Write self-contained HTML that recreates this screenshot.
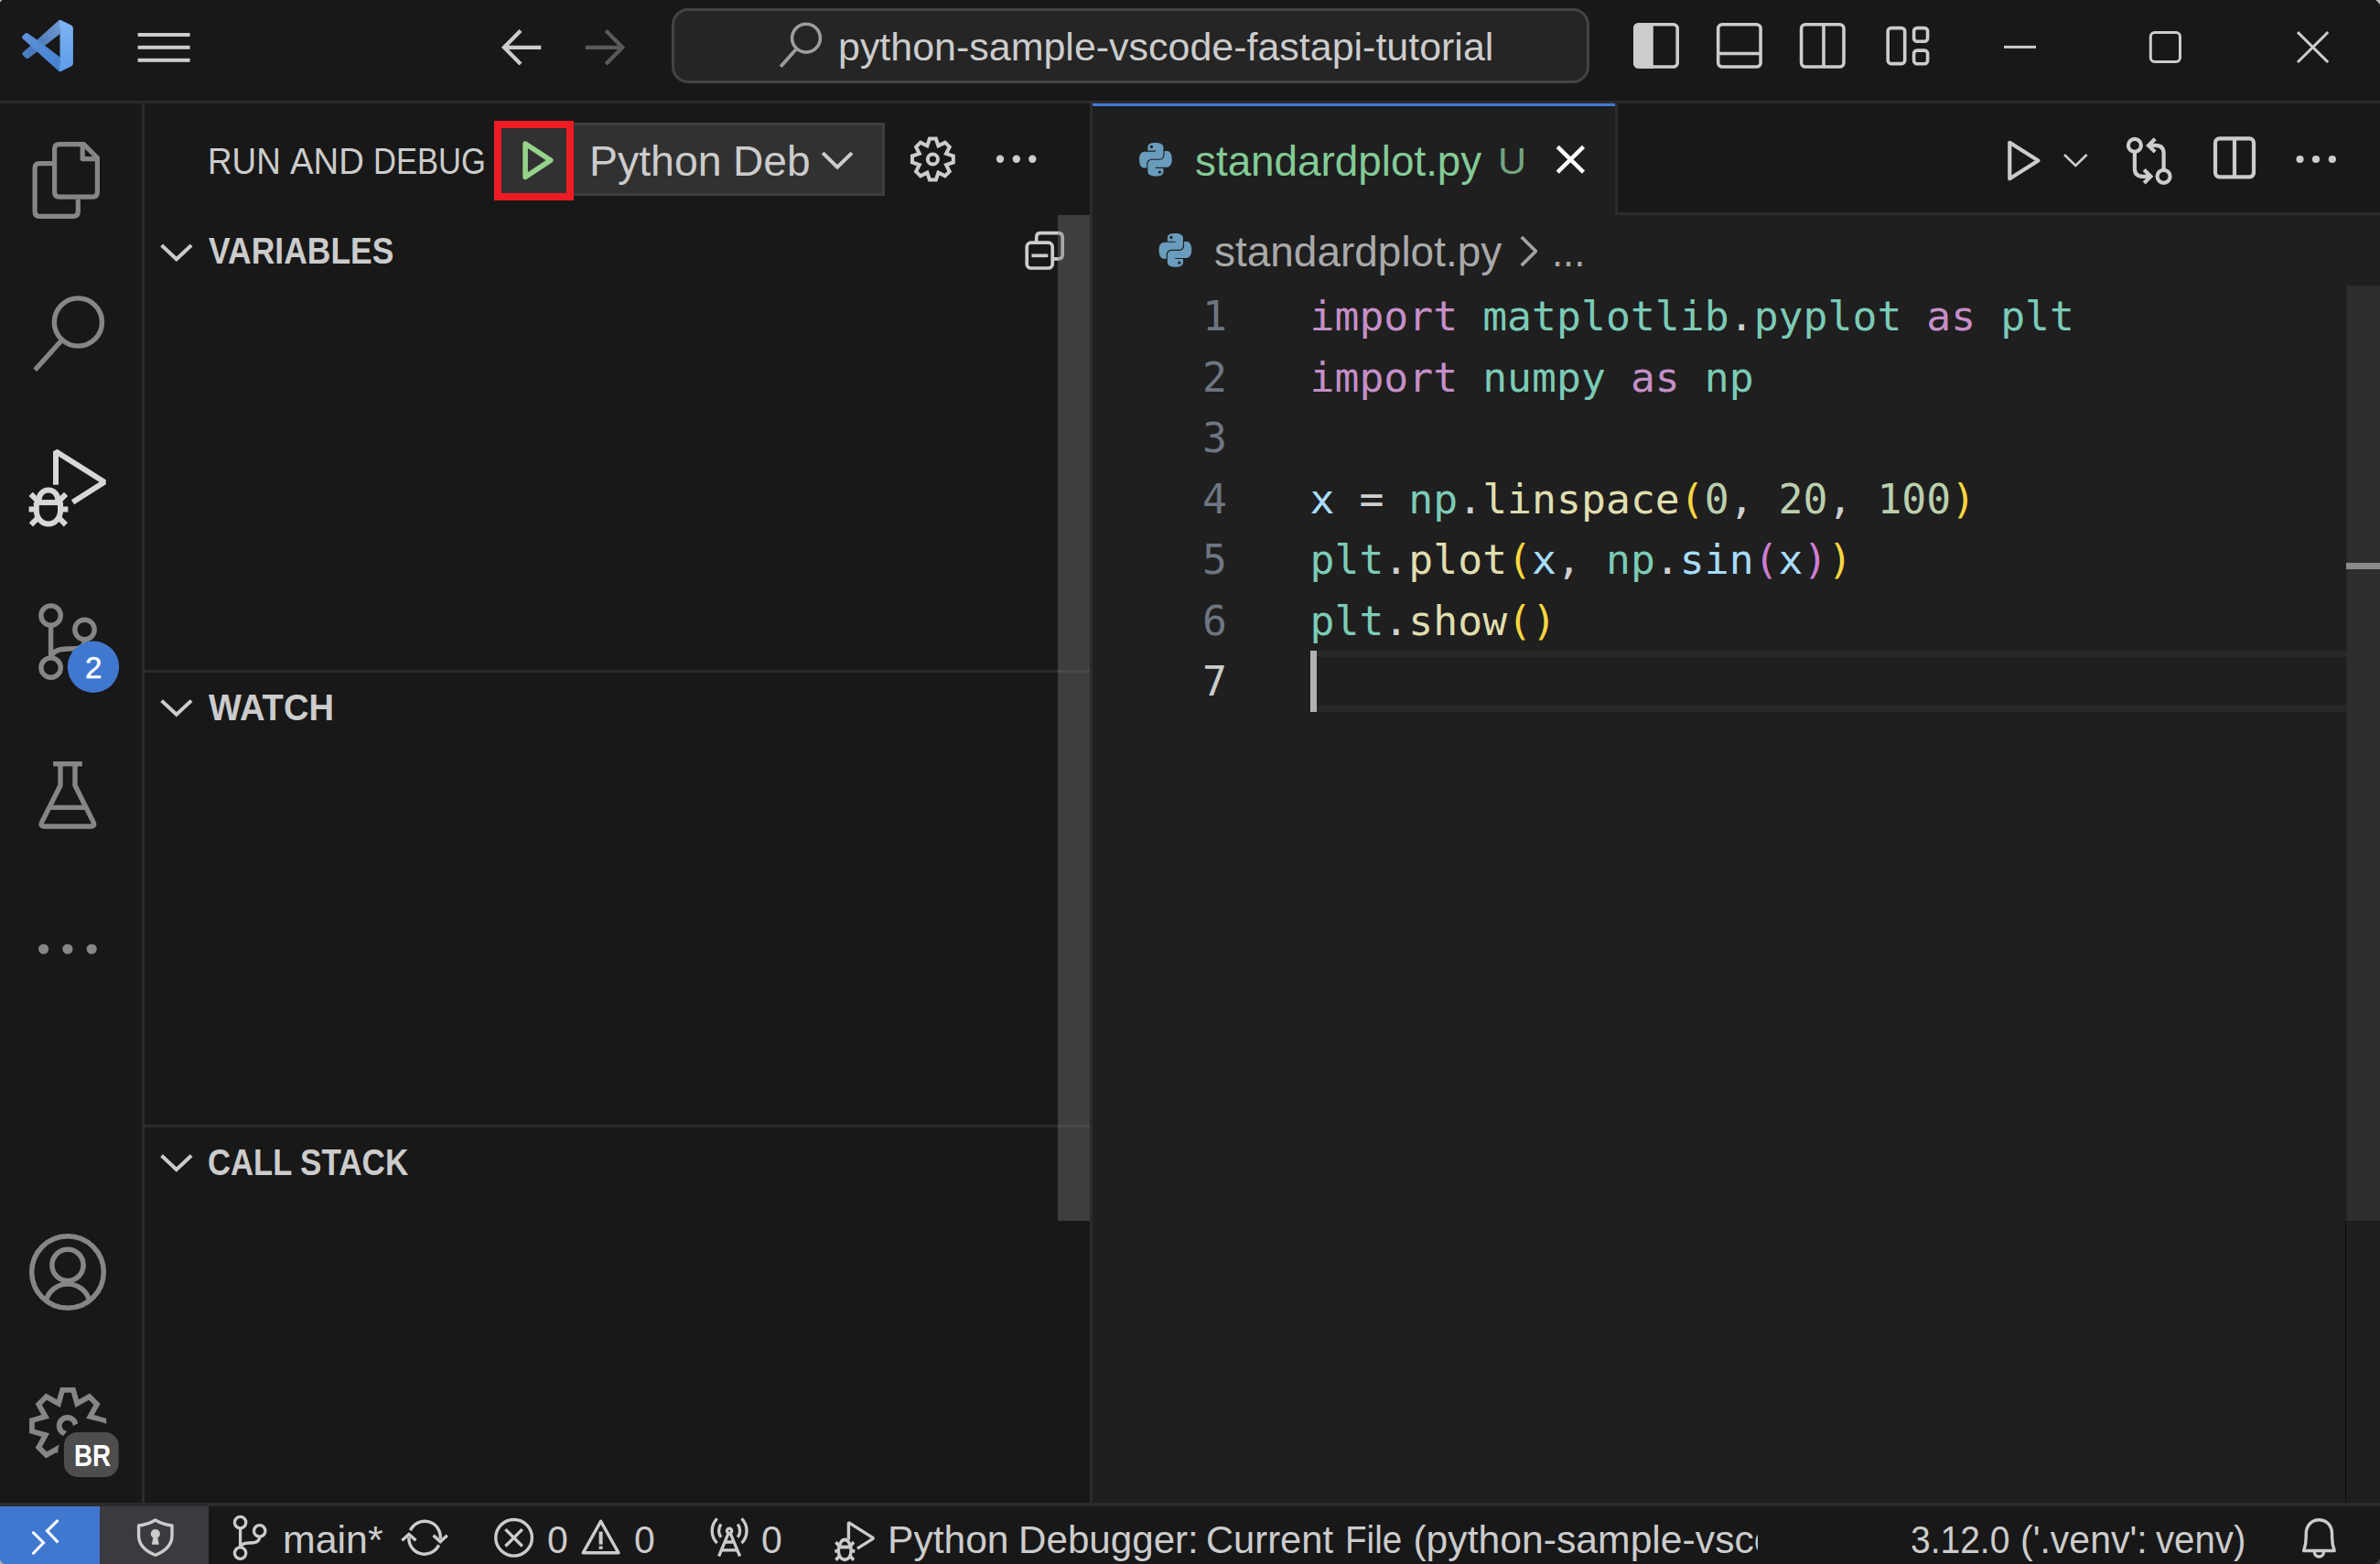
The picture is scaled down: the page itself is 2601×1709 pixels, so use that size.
<!DOCTYPE html>
<html lang="en">
<head>
<meta charset="utf-8">
<title>standardplot.py - python-sample-vscode-fastapi-tutorial - Visual Studio Code</title>
<style>
html,body{margin:0;padding:0;background:#181818;}
body{width:2601px;height:1709px;overflow:hidden;position:relative;font-family:"Liberation Sans", "DejaVu Sans", sans-serif;color:#cccccc;}
div,span,svg{position:absolute;box-sizing:border-box;}
.grp{left:0;top:0;}
.t{white-space:pre;transform-origin:0 0;display:block;}
svg{left:0;top:0;overflow:visible;}
.s{fill:none;stroke:#cccccc;}
.g{fill:none;stroke:#868686;}
#titlebar{left:0;top:0;width:2601px;height:110px;background:#181818;}
#titleborder{left:0;top:110px;width:2601px;height:3px;background:#2b2b2b;}
#activitybar{left:0;top:113px;width:155px;height:1529px;background:#181818;}
#activityborder{left:155px;top:113px;width:3px;height:1529px;background:#2b2b2b;}
#sidebar{left:158px;top:113px;width:1033px;height:1529px;background:#181818;}
#sideborder{left:1191px;top:113px;width:3px;height:1529px;background:#2b2b2b;}
#editor{left:1194px;top:113px;width:1407px;height:1529px;background:#1f1f1f;}
#statusborder{left:0;top:1642px;width:2601px;height:4px;background:#2b2b2b;}
#statusbar{left:0;top:1646px;width:2601px;height:63px;background:#181818;}
</style>
</head>
<body>
<div id="titlebar">
<svg stroke-linejoin="round" width="2601" height="110" viewBox="0 0 2601 110">
<defs>
<linearGradient id="lgA" gradientUnits="userSpaceOnUse" x1="64" y1="24" x2="26" y2="62"><stop offset="0" stop-color="#6f9ad4"/><stop offset="0.45" stop-color="#5983bf"/><stop offset="0.62" stop-color="#4a75b3"/><stop offset="1" stop-color="#4c7fc4"/></linearGradient>
<linearGradient id="lgB" gradientUnits="userSpaceOnUse" x1="27" y1="38" x2="64" y2="76"><stop offset="0" stop-color="#5d91d9"/><stop offset="1" stop-color="#4580d0"/></linearGradient>
<linearGradient id="lg1" x1="0" y1="0" x2="0" y2="1"><stop offset="0" stop-color="#80b3f1"/><stop offset="1" stop-color="#5c9ce9"/></linearGradient>
</defs>
<path d="M64.7,21.8 L65.6,37 L49.1,49.7 L39.9,56.9 L31.4,63.5 Q29.6,64.7 28,63.2 L24.9,60 Q23.6,58.4 25.2,57 L33,50.3 L40.5,43.4 Z" fill="url(#lgA)"/>
<path d="M64.7,78.2 L65.6,62.6 L49.1,49.7 L30.6,36.6 Q28.8,35.4 27.2,36.8 L24.7,39.2 Q23.3,40.7 24.8,42.3 Z" fill="url(#lgB)"/>
<path d="M64.7,21.8 Q65.4,21.4 66.6,22 L77.9,27.4 Q79.9,28.5 79.9,30.8 L79.9,69.2 Q79.9,71.5 77.9,72.6 L66.6,78 Q65.4,78.6 64.7,78.2 L65.5,62 L65.5,38 Z" fill="url(#lg1)"/>
<g fill="#cccccc"><rect x="150.6" y="36" width="57" height="4"/><rect x="150.6" y="49.8" width="57" height="4"/><rect x="150.6" y="63.8" width="57" height="4"/></g>
<path class="s" stroke-width="4.2" stroke-linejoin="miter" d="M569,33.6 L550.9,51.8 L569,70 M550.9,51.8 H591.3"/>
<path class="s" stroke-width="4.2" stroke-linejoin="miter" style="stroke:#5a5a5a" d="M662.2,33.6 L680.3,51.8 L662.2,70 M680.3,51.8 H639.8"/>
</svg>
<div id="cmdcenter" style="left:734px;top:8.6px;width:1003px;height:82px;border:3px solid #434343;border-radius:18px;background:#252525;"></div>
<svg stroke-linejoin="round" width="2601" height="110" viewBox="0 0 2601 110">
<circle cx="881" cy="41.7" r="15.4" fill="none" stroke="#9d9d9d" stroke-width="3.6"/>
<path d="M870.3,53.6 L853.2,72.8" fill="none" stroke="#9d9d9d" stroke-width="3.8"/>
</svg>
<span class="t " style="left:916.26px;top:30.05px;font-size:42.7px;line-height:42.7px;color:#cccccc;transform:scaleX(1.0064);">python-sample-vscode-fastapi-tutorial</span>
<svg stroke-linejoin="round" width="2601" height="110" viewBox="0 0 2601 110">
<g class="s" stroke-width="3.6">
<rect x="1786.8" y="26.8" width="46.4" height="46.2" rx="4.5"/>
<rect x="1877.7" y="26.8" width="46.4" height="46.2" rx="4.5"/><path d="M1877.7,58.5 H1924.1"/>
<rect x="1968.6" y="26.8" width="46.4" height="46.2" rx="4.5"/><path d="M1993,26.8 V73"/>
<rect x="2063.2" y="30.6" width="18.5" height="39" rx="3.5"/>
<rect x="2091.6" y="30.6" width="15" height="14.6" rx="3.5"/>
<rect x="2091.6" y="55.1" width="15" height="14.6" rx="3.5"/>
</g>
<path d="M1791.3,25 H1806.8 V74.8 H1791.3 Q1785,74.8 1785,68.5 V31.3 Q1785,25 1791.3,25 Z" fill="#cccccc"/>
<rect x="2190" y="49.9" width="35" height="3" fill="#cccccc"/>
<rect class="s" stroke-width="3" x="2350.3" y="35.6" width="32.2" height="31.9" rx="4.5"/>
<path class="s" stroke-width="3" d="M2511,35.1 L2544.2,68 M2544.2,35.1 L2511,68"/>
</svg>
</div><div id="titleborder"></div>
<div id="activitybar"></div><div id="activityborder"></div>
<svg stroke-linejoin="round" id="activityicons" width="160" height="1709" viewBox="0 0 160 1709">
<g class="g" stroke-width="5.2">
<path d="M91.5,157.6 H64.6 Q59.6,157.6 59.6,162.6 V210.1 Q59.6,215.1 64.6,215.1 H101.4 Q106.4,215.1 106.4,210.1 V172.5 Z"/>
<path d="M90.2,159 V173.6 H105"/>
<path d="M57,178.6 H43.1 Q38.1,178.6 38.1,183.6 V231.3 Q38.1,236.3 43.1,236.3 H80.3 Q85.3,236.3 85.3,231.3 V217.7"/>
</g>
<g class="g" stroke-width="5.4"><circle cx="85.4" cy="352" r="26.1"/><path d="M67.9,371.2 L38.3,404.3"/></g>
<g transform="translate(61,493.2) scale(1) translate(-61,-493.2)" fill="none" stroke="#d7d7d7" stroke-width="6" stroke-linejoin="bevel" stroke-linecap="butt"><path d="M61,529.7 V493.2 L114.1,526.8 L79.5,548.7"/><g transform="translate(0,575.3) scale(1,1.0) translate(0,-575.3)"><path d="M42.5,549.1 V546.3 A10.4,10.8 0 0 1 63.3,546.3 V549.1"/><path d="M37.6,549.1 H68.4"/><path d="M39.8,549.1 V558 A13.1,14.5 0 0 0 66,558 V549.1"/><path d="M31.6,556.5 H37.4 M68.4,556.5 H74.4"/><path d="M33.7,539.9 L40.2,546.4 M72.1,539.9 L65.6,546.4"/><path d="M33.9,573.3 L40.6,566.7 M71.9,573.3 L65.2,566.7"/></g></g>
<g class="g" stroke-width="5.4">
<circle cx="55.6" cy="672.6" r="10.7"/><circle cx="92.5" cy="688" r="10.7"/><circle cx="55.6" cy="729.6" r="10.7"/>
<path d="M55.6,682.7 V718.9"/>
<path d="M92.5,698.7 C92.5,709 84,709 74,709 C63,709 57,712 55.6,719"/>
</g>
<circle cx="102" cy="728.7" r="28.2" fill="#4078d0"/>
<g class="g" stroke-width="5.4" stroke-linejoin="miter">
<path d="M58.1,834.7 H89.8"/>
<path d="M66,834.7 V858.3 L45.6,898.6 Q43.6,903 48.4,903 H99.4 Q104.2,903 102.2,898.6 L82,858.3 V834.7" stroke-linejoin="round"/>
<path d="M55.5,882.4 H92.3"/>
</g>
<g fill="#868686"><circle cx="47.6" cy="1037" r="5.6"/><circle cx="73.9" cy="1037" r="5.6"/><circle cx="100.2" cy="1037" r="5.6"/></g>
<g class="g" stroke-width="5.5">
<circle cx="74" cy="1390" r="39.3"/><circle cx="74" cy="1382.4" r="17.1"/>
<path d="M50.3,1421 A24.6,24.6 0 0 1 97.7,1421"/>
</g>
<g class="g" stroke-width="5.8" stroke-linejoin="miter"><path d="M64,1533.61 L68.18,1518.85 L80.02,1518.85 L84.2,1533.61 L84.2,1533.61 L97.6,1526.13 L105.97,1534.5 L98.49,1547.9 L98.49,1547.9 L113.25,1552.08 L113.25,1563.92 L98.49,1568.1 L98.49,1568.1 L105.97,1581.5 L97.6,1589.87 L84.2,1582.39 L84.2,1582.39 L80.02,1597.15 L68.18,1597.15 L64,1582.39 L64,1582.39 L50.6,1589.87 L42.23,1581.5 L49.71,1568.1 L49.71,1568.1 L34.95,1563.92 L34.95,1552.08 L49.71,1547.9 L49.71,1547.9 L42.23,1534.5 L50.6,1526.13 L64,1533.61 Z"/><circle cx="73.7" cy="1558" r="9"/></g>
<circle cx="100" cy="1589.3" r="37" fill="#181818"/><rect x="69.9" y="1564.9" width="59.8" height="49.1" rx="15" fill="#4d4d4d"/>
</svg>
<span class="t " style="left:92.77px;top:714.30px;font-size:32.6px;line-height:32.6px;color:#ffffff;transform:scaleX(1.0179);-webkit-text-stroke:0.5px #ffffff;">2</span>
<span class="t " style="left:81.02px;top:1573.83px;font-size:33.4px;line-height:33.4px;color:#ffffff;font-weight:700;transform:scaleX(0.8343);">BR</span>
<div id="sidebar"></div>
<span class="grp"><span class="t " style="left:227.17px;top:155.80px;font-size:40.4px;line-height:40.4px;color:#cccccc;transform:scaleX(0.9124);">RUN</span><span class="t " style="left:317.23px;top:155.80px;font-size:40.4px;line-height:40.4px;color:#cccccc;transform:scaleX(0.9471);">AND</span><span class="t " style="left:407.76px;top:155.80px;font-size:40.4px;line-height:40.4px;color:#cccccc;transform:scaleX(0.8556);">DEBUG</span></span>
<div id="cfgselect" style="left:627px;top:134.3px;width:340px;height:79.7px;background:#313131;border-top:3px solid #3e3e3e;border-bottom:3px solid #3e3e3e;border-right:3px solid #3e3e3e;"></div>
<div id="startbtn" style="left:540px;top:132px;width:87px;height:86.7px;background:#313131;border:8px solid #ed1c24;"></div>
<span class="grp"><span class="t " style="left:643.77px;top:153.35px;font-size:46.6px;line-height:46.6px;color:#cccccc;transform:scaleX(0.9966);">Python</span><span class="t " style="left:801.10px;top:153.35px;font-size:46.6px;line-height:46.6px;color:#cccccc;transform:scaleX(0.9895);">Deb</span></span>
<svg stroke-linejoin="round" width="1200" height="1709" viewBox="0 0 1200 1709">
<path d="M574.1,157 L601.8,175.2 L574.1,193.4 Z" fill="none" stroke="#95d38a" stroke-width="5.6" stroke-linejoin="round"/>
<path class="s" stroke-width="4" stroke-linejoin="miter" d="M899.2,167.1 L915.1,182.7 L931,167.1"/>
<g class="s" stroke-width="4" stroke-linejoin="miter"><path d="M1013.35,159.4 L1015.93,151.57 L1022.87,151.57 L1025.45,159.4 L1025.45,159.4 L1032.81,155.68 L1037.72,160.59 L1034,167.95 L1034,167.95 L1041.83,170.53 L1041.83,177.47 L1034,180.05 L1034,180.05 L1037.72,187.41 L1032.81,192.32 L1025.45,188.6 L1025.45,188.6 L1022.87,196.43 L1015.93,196.43 L1013.35,188.6 L1013.35,188.6 L1005.99,192.32 L1001.08,187.41 L1004.8,180.05 L1004.8,180.05 L996.97,177.47 L996.97,170.53 L1004.8,167.95 L1004.8,167.95 L1001.08,160.59 L1005.99,155.68 L1013.35,159.4 Z"/><circle cx="1019.4" cy="174" r="5.6"/></g>
<g fill="#cccccc"><circle cx="1093" cy="173.7" r="4.2"/><circle cx="1110.8" cy="173.7" r="4.2"/><circle cx="1128.3" cy="173.7" r="4.2"/></g>
<g class="s" stroke-width="4" stroke-linejoin="miter">
<path d="M176.6,268 L192.85,283.2 L209.1,268"/>
<path d="M176.6,765.6 L192.85,780.8 L209.1,765.6"/>
<path d="M176.6,1262.8 L192.85,1278 L209.1,1262.8"/>
</g>
<g class="s" stroke-width="3.7">
<rect x="1122.2" y="265.2" width="28" height="27.8" rx="4.5"/>
<path d="M1132.7,265 V259.2 Q1132.7,254.7 1137.2,254.7 H1156.7 Q1161.2,254.7 1161.2,259.2 V278.3 Q1161.2,282.8 1156.7,282.8 H1150.4"/>
<path d="M1127.4,279.3 H1145.3"/>
</g>
</svg>
<span class="t " style="left:227.83px;top:254.61px;font-size:39.8px;line-height:39.8px;color:#cccccc;font-weight:700;transform:scaleX(0.8917);">VARIABLES</span>
<div class="sep" style="left:158px;top:732px;width:1033px;height:3px;background:#2b2b2b;"></div>
<span class="t " style="left:228.01px;top:753.91px;font-size:39.8px;line-height:39.8px;color:#cccccc;font-weight:700;transform:scaleX(0.9581);">WATCH</span>
<div class="sep" style="left:158px;top:1229px;width:1033px;height:3px;background:#2b2b2b;"></div>
<span class="grp"><span class="t " style="left:226.80px;top:1251.31px;font-size:39.8px;line-height:39.8px;color:#cccccc;font-weight:700;transform:scaleX(0.8705);">CALL</span><span class="t " style="left:328.33px;top:1251.31px;font-size:39.8px;line-height:39.8px;color:#cccccc;font-weight:700;transform:scaleX(0.8820);">STACK</span></span>
<div id="sidescroll" style="left:1156px;top:235px;width:35px;height:1099px;background:rgba(121,121,121,0.4);"></div>
<div id="sideborder"></div>
<div id="editor"></div>
<div id="tabbar" style="left:1194px;top:113px;width:1407px;height:119px;background:#181818;"></div>
<div id="tabbarborder" style="left:1194px;top:232px;width:1407px;height:3px;background:#2b2b2b;"></div>
<div id="tab" style="left:1194px;top:113px;width:571px;height:122px;background:#1f1f1f;border-top:3px solid #3f7bd6;"></div>
<div id="tabright" style="left:1765px;top:113px;width:3px;height:119px;background:#2b2b2b;"></div>
<svg stroke-linejoin="round" width="2601" height="320" viewBox="0 0 2601 320">
<g transform="translate(1244.3,155.2) scale(0.372,0.381)" fill="#699cbd"><g id="py1">
<path fill-rule="evenodd" d="M50,2 C36,2 27,5 27,15 V24.5 H50.5 V27.5 H18 C8,27.5 2,36 2,50 C2,64 7,74.5 16,74.5 H24 V63 C24,55 30,48.5 39,48.5 H61 C68,48.5 73,43 73,36 V15 C73,6 63,2 50,2 Z M38,9.3 A4.3,4.3 0 1 1 38,17.9 A4.3,4.3 0 1 1 38,9.3 Z"/>
</g><use href="#py1" transform="rotate(180 50 50)"/></g>
<g transform="translate(1265.8,254.3) scale(0.372,0.381)" fill="#699cbd"><g id="py2">
<path fill-rule="evenodd" d="M50,2 C36,2 27,5 27,15 V24.5 H50.5 V27.5 H18 C8,27.5 2,36 2,50 C2,64 7,74.5 16,74.5 H24 V63 C24,55 30,48.5 39,48.5 H61 C68,48.5 73,43 73,36 V15 C73,6 63,2 50,2 Z M38,9.3 A4.3,4.3 0 1 1 38,17.9 A4.3,4.3 0 1 1 38,9.3 Z"/>
</g><use href="#py2" transform="rotate(180 50 50)"/></g>
<path d="M1702.2,160.4 L1730.5,188.1 M1730.5,160.4 L1702.2,188.1" fill="none" stroke="#ffffff" stroke-width="4.4"/>
<path d="M1662.8,259 L1678.4,274.5 L1662.8,290" fill="none" stroke="#a3a3a3" stroke-width="3.8"/>
<g class="s" stroke-width="4.2">
<path d="M2196.3,155.8 L2227.5,175.5 L2196.3,195.2 Z"/>
<path d="M2256,169 L2268.3,181 L2280.6,169" stroke-width="2.6" stroke-linejoin="miter"/>
<circle cx="2332.9" cy="158.9" r="7"/><circle cx="2364.6" cy="192.8" r="7"/>
<path d="M2332.9,166 V184 Q2332.9,192.8 2341.7,192.8 H2349.5"/>
<path d="M2343.2,185.6 L2350.4,192.8 L2343.2,200" stroke-linejoin="miter"/>
<path d="M2364.6,185.7 V167.7 Q2364.6,158.9 2355.8,158.9 H2349"/>
<path d="M2355.2,151.7 L2348,158.9 L2355.2,166.1" stroke-linejoin="miter"/>
<rect x="2421" y="151.3" width="42" height="42" rx="4.5"/><path d="M2442,151.3 V193.3"/>
</g>
<g fill="#cccccc"><circle cx="2513.5" cy="174" r="4.1"/><circle cx="2531" cy="174" r="4.1"/><circle cx="2548.8" cy="174" r="4.1"/></g>
</svg>
<span class="t " style="left:1305.92px;top:152.85px;font-size:46.6px;line-height:46.6px;color:#84cb97;transform:scaleX(0.9832);">standardplot.py</span>
<span class="t " style="left:1636.96px;top:156.25px;font-size:41.4px;line-height:41.4px;color:#73a482;transform:scaleX(1.0388);">U</span>
<span class="t " style="left:1327.12px;top:251.85px;font-size:46.6px;line-height:46.6px;color:#a9a9a9;transform:scaleX(0.9863);">standardplot.py</span>
<span class="t " style="left:1696.43px;top:251.85px;font-size:46.6px;line-height:46.6px;color:#a9a9a9;transform:scaleX(0.9335);">...</span>
<div id="curline" style="left:1432px;top:710.8px;width:1132px;height:67.3px;border:7px solid #282828;border-right:none;"></div>
<div id="cursor" style="left:1431.8px;top:710.8px;width:7.4px;height:67.3px;background:#b1b1b1;"></div>
<style>.ln,.cl{font-family:"DejaVu Sans Mono", "Liberation Mono", monospace;font-size:44.77px;line-height:66.5px;height:66.5px;white-space:pre;}.ln{left:1233px;width:108px;text-align:right;color:#6e7681;}.cl{left:1431.5px;}.cl span{position:static;}.k{color:#c58fc7}.m{color:#7ccbb6}.v{color:#a8dcfc}.f{color:#e0deb0}.n{color:#bbcfae}.p{color:#d0d0d0}.b1{color:#fad641}.b2{color:#cd7dd2}</style>
<div id="code">
<div class="ln" style="top:313.40px;">1</div>
<div class="cl" style="top:313.40px;"><span class="k">import</span><span class="p"> </span><span class="m">matplotlib</span><span class="p">.</span><span class="m">pyplot</span><span class="p"> </span><span class="k">as</span><span class="p"> </span><span class="m">plt</span></div>
<div class="ln" style="top:379.90px;">2</div>
<div class="cl" style="top:379.90px;"><span class="k">import</span><span class="p"> </span><span class="m">numpy</span><span class="p"> </span><span class="k">as</span><span class="p"> </span><span class="m">np</span></div>
<div class="ln" style="top:446.40px;">3</div>
<div class="cl" style="top:446.40px;"></div>
<div class="ln" style="top:512.90px;">4</div>
<div class="cl" style="top:512.90px;"><span class="v">x</span><span class="p"> = </span><span class="m">np</span><span class="p">.</span><span class="f">linspace</span><span class="b1">(</span><span class="n">0</span><span class="p">, </span><span class="n">20</span><span class="p">, </span><span class="n">100</span><span class="b1">)</span></div>
<div class="ln" style="top:579.40px;">5</div>
<div class="cl" style="top:579.40px;"><span class="m">plt</span><span class="p">.</span><span class="f">plot</span><span class="b1">(</span><span class="v">x</span><span class="p">, </span><span class="m">np</span><span class="p">.</span><span class="v">sin</span><span class="b2">(</span><span class="v">x</span><span class="b2">)</span><span class="b1">)</span></div>
<div class="ln" style="top:645.90px;">6</div>
<div class="cl" style="top:645.90px;"><span class="m">plt</span><span class="p">.</span><span class="f">show</span><span class="b1">()</span></div>
<div class="ln" style="top:712.40px;color:#cccccc;">7</div>
<div class="cl" style="top:712.40px;"></div>
</div>
<div id="rulerline" style="left:2563px;top:1334px;width:1.3px;height:308px;background:#0c0c0c;"></div>
<div id="ruler" style="left:2564px;top:312px;width:37px;height:1022px;background:#2d2d2d;border-left:1px solid #262626;"></div>
<div id="rulermark" style="left:2564px;top:615.3px;width:37px;height:6.8px;background:#8a8a8a;"></div>
<div id="statusborder"></div><div id="statusbar"></div>
<div id="remote" style="left:0;top:1646px;width:109px;height:63px;background:#4078d0;"></div>
<div id="trust" style="left:109px;top:1646px;width:119px;height:63px;background:#3a3b3f;"></div>
<svg stroke-linejoin="round" width="2601" height="1709" viewBox="0 0 2601 1709">
<g fill="none" stroke="#ffffff" stroke-width="3.1" stroke-linejoin="miter">
<path d="M63.4,1661.2 L51.5,1672.9 L63.4,1685.4"/><path d="M35.6,1673.9 L47.5,1685.7 L35.6,1698.2"/>
</g>
<g class="s" stroke-width="3.4">
<path d="M169.8,1661 C164,1664.5 158,1666.3 151.6,1667 V1678 C151.6,1688 158,1694.5 169.8,1699.3 C181.6,1694.5 188,1688 188,1678 V1667 C181.6,1666.3 175.6,1664.5 169.8,1661 Z"/>
</g>
<circle cx="169.8" cy="1676" r="5.1" fill="#cccccc"/><path d="M167.6,1679 H172 L173.8,1687.8 H165.8 Z" fill="#cccccc"/>
<g class="s" stroke-width="3.3">
<circle cx="262.6" cy="1663.6" r="6.2"/><circle cx="283.7" cy="1672.9" r="6.2"/><circle cx="262.6" cy="1697.1" r="6.2"/>
<path d="M262.6,1669.8 V1690.9"/>
<path d="M283.7,1679.1 C283.7,1686 277,1686 272,1686 C266,1686 263.2,1688 262.6,1691"/>
</g>
<g class="s" stroke-width="3.4" stroke-linejoin="miter">
<path d="M448.5,1672.3 A17.2,17.2 0 0 1 481.2,1681.5"/>
<path d="M473.6,1677.8 L481.2,1684.6 L488.8,1677.8"/>
<path d="M479.6,1688.3 A17.2,17.2 0 0 1 446.9,1679.6"/>
<path d="M439.3,1683.3 L446.9,1676.5 L454.5,1683.3"/>
<circle cx="561.6" cy="1680.3" r="19.8"/>
<path d="M552.4,1671.1 L570.8,1689.5 M570.8,1671.1 L552.4,1689.5"/>
<path d="M656.6,1662.3 L676,1696.8 H637.2 Z" stroke-linejoin="round"/>
</g>
<rect x="654.6" y="1673.6" width="4" height="14.1" fill="#cccccc"/><rect x="654.6" y="1689.5" width="4" height="3.3" fill="#cccccc"/>
<g class="s" stroke-width="3.3">
<circle cx="797.1" cy="1672.7" r="2.6"/>
<path d="M796.2,1675.2 L785.6,1700.5 M798,1675.2 L808.6,1700.5"/>
<path d="M791.8,1685 H802.4 M788.4,1693.8 H805.8"/>
<path d="M788,1665.6 A11.5,11.5 0 0 0 788,1679.8"/><path d="M806.2,1665.6 A11.5,11.5 0 0 1 806.2,1679.8"/>
<path d="M783.7,1659.3 A19,19 0 0 0 783.7,1686.1"/><path d="M810.5,1659.3 A19,19 0 0 1 810.5,1686.1"/>
</g>
<g transform="translate(927.4,1663.6) scale(0.515) translate(-61,-493.2)" fill="none" stroke="#cccccc" stroke-width="6.6" stroke-linejoin="bevel" stroke-linecap="butt"><path d="M61,529.7 V493.2 L114.1,526.8 L79.5,548.7"/><g transform="translate(0,575.3) scale(1,1.14) translate(0,-575.3)"><path d="M42.5,549.1 V546.3 A10.4,10.8 0 0 1 63.3,546.3 V549.1"/><path d="M37.6,549.1 H68.4"/><path d="M39.8,549.1 V558 A13.1,14.5 0 0 0 66,558 V549.1"/><path d="M31.6,556.5 H37.4 M68.4,556.5 H74.4"/><path d="M33.7,539.9 L40.2,546.4 M72.1,539.9 L65.6,546.4"/><path d="M33.9,573.3 L40.6,566.7 M71.9,573.3 L65.2,566.7"/></g></g>
<g class="s" stroke-width="3.4">
<path d="M2517.6,1694.5 H2551.2 C2549.5,1690 2548.6,1686 2548.6,1680 V1676 C2548.6,1667 2542.5,1660.7 2534.4,1660.7 C2526.3,1660.7 2520.2,1667 2520.2,1676 V1680 C2520.2,1686 2519.3,1690 2517.6,1694.5 Z"/>
<path d="M2529.4,1696 A5,5 0 0 0 2539.4,1696"/>
</g>
</svg>
<span class="t " style="left:308.74px;top:1660.85px;font-size:42.7px;line-height:42.7px;color:#cccccc;transform:scaleX(1.0041);">main*</span>
<span class="t " style="left:597.93px;top:1660.85px;font-size:42.7px;line-height:42.7px;color:#cccccc;transform:scaleX(0.9593);">0</span>
<span class="t " style="left:692.73px;top:1660.85px;font-size:42.7px;line-height:42.7px;color:#cccccc;transform:scaleX(0.9593);">0</span>
<span class="t " style="left:831.83px;top:1660.85px;font-size:42.7px;line-height:42.7px;color:#cccccc;transform:scaleX(0.9593);">0</span>
<div id="dbgstatus" style="left:960px;top:1646px;width:960.6px;height:63px;overflow:hidden;">
<span class="grp"><span class="t " style="left:10.04px;top:14.85px;font-size:42.7px;line-height:42.7px;color:#cccccc;transform:scaleX(0.9967);">Python</span><span class="t " style="left:152.77px;top:14.85px;font-size:42.7px;line-height:42.7px;color:#cccccc;transform:scaleX(0.9873);">Debugger:</span><span class="t " style="left:358.44px;top:14.85px;font-size:42.7px;line-height:42.7px;color:#cccccc;transform:scaleX(0.9769);">Current</span><span class="t " style="left:510.36px;top:14.85px;font-size:42.7px;line-height:42.7px;color:#cccccc;transform:scaleX(0.9053);">File</span><span class="t " style="left:584.40px;top:14.85px;font-size:42.7px;line-height:42.7px;color:#cccccc;">(python-sample-vscode-fastapi-tutorial)</span></span>
</div>
<span class="grp"><span class="t " style="left:2087.58px;top:1660.85px;font-size:42.7px;line-height:42.7px;color:#cccccc;transform:scaleX(0.9126);">3.12.0</span><span class="t " style="left:2208.30px;top:1660.85px;font-size:42.7px;line-height:42.7px;color:#cccccc;transform:scaleX(0.9601);">('.venv':</span><span class="t " style="left:2356.30px;top:1660.85px;font-size:42.7px;line-height:42.7px;color:#cccccc;transform:scaleX(0.9425);">venv)</span></span>
<svg stroke-linejoin="round" id="corners" width="2601" height="1709" viewBox="0 0 2601 1709">
<path d="M0,0 H2.2 Q1.6,1.6 0,2.2 Z" fill="#b9b9b9"/>
<path d="M2596,0 H2601 V5.2 Q2599.5,2 2596,0 Z" fill="#b8b8b8"/>
<path d="M0,1704.6 Q1.2,1707.8 4.6,1709 H0 Z" fill="#aaaaaa"/>
<path d="M2601,1702.4 Q2599.5,1707 2594.4,1709 H2601 Z" fill="#404040"/>
</svg>
</body></html>
